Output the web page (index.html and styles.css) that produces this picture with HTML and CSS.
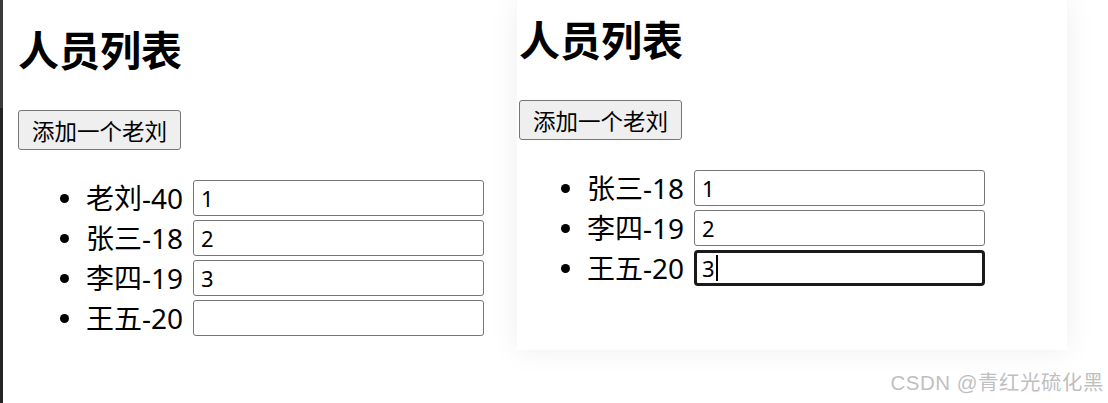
FILE: index.html
```html
<!DOCTYPE html>
<html lang="zh-CN">
<head>
<meta charset="utf-8">
<title>人员列表</title>
<link rel="stylesheet" href="styles.css">
</head>
<body>
<div class="screen">
  <section class="pane pane-left">
    <div class="app">
      <h1 class="title">人员列表</h1>
      <button class="add-btn" type="button">添加一个老刘</button>
      <ul class="people">
        <li class="person"><span class="label">老刘-40</span><input class="field" type="text" value="1"></li>
        <li class="person"><span class="label">张三-18</span><input class="field" type="text" value="2"></li>
        <li class="person"><span class="label">李四-19</span><input class="field" type="text" value="3"></li>
        <li class="person"><span class="label">王五-20</span><input class="field" type="text" value=""></li>
      </ul>
    </div>
  </section>
  <section class="pane pane-right">
    <div class="card">
      <div class="app app-shifted">
        <h1 class="title">人员列表</h1>
        <button class="add-btn" type="button">添加一个老刘</button>
        <ul class="people">
          <li class="person"><span class="label">张三-18</span><input class="field" type="text" value="1"></li>
          <li class="person"><span class="label">李四-19</span><input class="field" type="text" value="2"></li>
          <li class="person"><span class="label">王五-20</span><span class="field field-focus">3<span class="caret"></span></span></li>
        </ul>
      </div>
    </div>
    <div class="watermark">CSDN @青红光硫化黑</div>
  </section>
</div>
</body>
</html>
```
FILE: styles.css
```css
html, body {
  margin: 0;
  padding: 0;
  background: #ffffff;
}

body {
  font-family: "Noto Sans", "Noto Sans CJK SC", sans-serif;
  color: #000;
}

.screen {
  display: flex;
  width: 1108px;
  height: 403px;
  overflow: hidden;
}

.pane {
  height: 403px;
  box-sizing: border-box;
}

.pane-left {
  width: 501px;
  border-left: 3px solid #242424;
  padding-left: 15px;
  position: relative;
}

.pane-left::before {
  content: "";
  position: absolute;
  left: -3px;
  top: 0;
  width: 3px;
  height: 108px;
  background: #3a3a3a;
}

.pane-right {
  flex: 1;
  position: relative;
  padding-left: 16px;
}

.card {
  width: 550px;
  height: 350px;
  background: #fff;
  box-shadow: 0 0 28px rgba(0, 0, 0, 0.07);
  padding-left: 2px;
  box-sizing: border-box;
}

.app {
  display: flex;
  flex-direction: column;
  align-items: flex-start;
  padding-top: 24px;
}

.app-shifted {
  padding-top: 14px;
}

.title {
  margin: 0;
  font-family: "Noto Sans CJK SC", sans-serif;
  font-size: 41px;
  line-height: 48px;
  font-weight: 700;
}

.add-btn {
  margin-top: 38px;
  height: 40px;
  padding: 0 13px;
  font-family: "Noto Sans CJK SC", sans-serif;
  font-size: 22.5px;
  line-height: 1;
  background: #efefef;
  border: 1px solid #767676;
  border-radius: 3px;
  color: #000;
}

.people {
  list-style: none;
  margin: 28px 0 0;
  padding: 0;
}

.person {
  display: flex;
  align-items: center;
  height: 40px;
}

.person::before {
  content: "";
  width: 9px;
  height: 9px;
  border-radius: 50%;
  background: #000;
  margin-left: 42px;
  margin-right: 17px;
}

.label {
  font-size: 28px;
  font-family: "Noto Sans", "Noto Sans CJK SC", sans-serif;
  line-height: 36px;
  white-space: nowrap;
}

.field {
  margin-left: 10px;
  width: 291px;
  height: 36px;
  box-sizing: border-box;
  border: 1px solid #767676;
  border-radius: 3px;
  padding: 0 7px;
  font-family: "Noto Sans", "Liberation Sans", sans-serif;
  font-size: 22px;
  color: #000;
  background: #fff;
  outline: none;
}

.field-focus {
  display: flex;
  align-items: center;
  border: 3px solid #1a1a1a;
  border-radius: 4px;
  padding: 0 5px;
}

.caret {
  display: inline-block;
  width: 2px;
  height: 26px;
  background: #000;
  margin-left: 1px;
}

.watermark {
  position: absolute;
  right: 4px;
  bottom: 7px;
  font-family: "Liberation Sans", "Noto Sans CJK SC", sans-serif;
  font-size: 20.5px;
  color: #bfbfbf;
  letter-spacing: 0.5px;
}
```
